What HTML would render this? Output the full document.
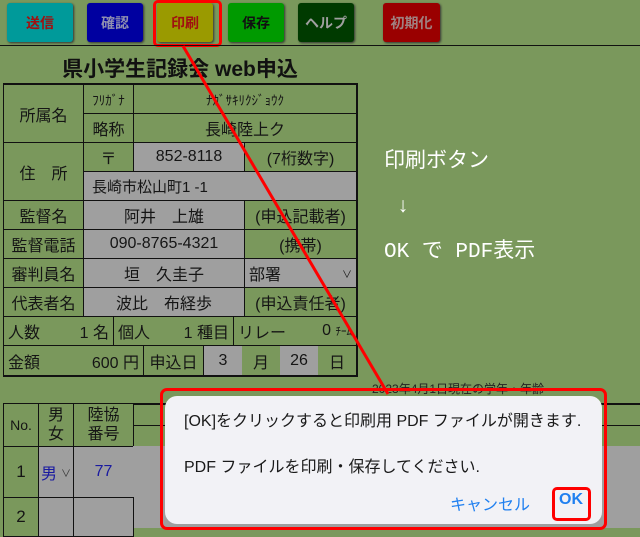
<!DOCTYPE html>
<html><head><meta charset="utf-8"><style>
*{margin:0;padding:0;box-sizing:border-box}
body{width:640px;height:528px;overflow:hidden;background:#7a985c;font-family:"Liberation Sans","Noto Sans CJK JP",sans-serif;position:relative;color:#151515}
.a{position:absolute}
.btn{position:absolute;top:3px;height:39px;border-radius:3px;box-shadow:1px 1px 2px #333;font-size:14px;font-weight:bold;display:flex;align-items:center;justify-content:center}
.c{position:absolute;display:flex;align-items:center;justify-content:center;font-size:16px;border:1px solid #111}
.g{background:#9f9f9f}
.k{background:#7a985c}
</style></head><body>
<div class="btn" style="left:7px;width:66px;background:#009a9a;color:#a01010">送信</div>
<div class="btn" style="left:87px;width:56px;background:#0000a0;color:#9090b0">確認</div>
<div class="btn" style="left:157px;width:56px;background:#9a9a00;color:#a01010">印刷</div>
<div class="btn" style="left:228px;width:56px;background:#009a00;color:#111">保存</div>
<div class="btn" style="left:298px;width:56px;background:#003a00;color:#a0a0a0">ヘルプ</div>
<div class="btn" style="left:383px;width:57px;background:#9a0000;color:#a08080">初期化</div>
<div class="a" style="left:153px;top:0;width:69px;height:47px;border:3px solid #f00;border-radius:5px"></div>
<div class="a" style="left:0;top:45px;width:640px;height:1px;background:#111"></div>
<div class="a" style="left:0;top:53px;width:360px;text-align:center;font-size:21px;font-weight:bold;color:#111">県小学生記録会 web申込</div>

<div class="a" style="left:3px;top:83px;width:355px;height:294px;border:2px solid #111"></div>
<div class="c k" style="left:3px;top:84px;width:81px;height:59px">所属名</div>
<div class="c k" style="left:83px;top:84px;width:51px;height:30px;font-size:13px">ﾌﾘｶﾞﾅ</div>
<div class="c k" style="left:133px;top:84px;width:224px;height:30px;font-size:13px">ﾅｶﾞｻｷﾘｸｼﾞｮｳｸ</div>
<div class="c k" style="left:83px;top:113px;width:51px;height:30px">略称</div>
<div class="c k" style="left:133px;top:113px;width:224px;height:30px">長崎陸上ク</div>
<div class="c k" style="left:3px;top:142px;width:81px;height:59px">住　所</div>
<div class="c k" style="left:83px;top:142px;width:51px;height:30px">〒</div>
<div class="c g" style="left:133px;top:142px;width:112px;height:30px">852-8118</div>
<div class="c k" style="left:244px;top:142px;width:113px;height:30px">(7桁数字)</div>
<div class="c g" style="left:83px;top:171px;width:274px;height:30px;justify-content:flex-start;padding-left:8px;font-size:15px">長崎市松山町1 -1</div>
<div class="c k" style="left:3px;top:200px;width:81px;height:30px">監督名</div>
<div class="c g" style="left:83px;top:200px;width:162px;height:30px">阿井　上雄</div>
<div class="c k" style="left:244px;top:200px;width:113px;height:30px">(申込記載者)</div>
<div class="c k" style="left:3px;top:229px;width:81px;height:30px">監督電話</div>
<div class="c g" style="left:83px;top:229px;width:162px;height:30px">090-8765-4321</div>
<div class="c k" style="left:244px;top:229px;width:113px;height:30px">(携帯)</div>
<div class="c k" style="left:3px;top:258px;width:81px;height:30px">審判員名</div>
<div class="c g" style="left:83px;top:258px;width:162px;height:30px">垣　久圭子</div>
<div class="c g" style="left:244px;top:258px;width:113px;height:30px;justify-content:space-between;padding:0 4px">部署<span style="font-size:10px">∨</span></div>
<div class="c k" style="left:3px;top:287px;width:81px;height:30px">代表者名</div>
<div class="c g" style="left:83px;top:287px;width:162px;height:30px">波比　布経歩</div>
<div class="c k" style="left:244px;top:287px;width:113px;height:30px">(申込責任者)</div>
<div class="c k" style="left:3px;top:316px;width:111px;height:30px;justify-content:space-between;padding:0 4px">人数<span>1 名</span></div>
<div class="c k" style="left:113px;top:316px;width:121px;height:30px;justify-content:space-between;padding:0 4px">個人<span>1 種目</span></div>
<div class="c k" style="left:233px;top:316px;width:124px;height:30px;justify-content:space-between;padding:0 4px">リレー<span>0 <small style="font-size:11px">ﾁｰﾑ</small></span></div>
<div class="c k" style="left:3px;top:345px;width:141px;height:31px;justify-content:space-between;padding:0 4px">金額<span>600 円</span></div>
<div class="c k" style="left:143px;top:345px;width:61px;height:31px">申込日</div>
<div class="a g" style="left:204px;top:346px;width:38px;height:29px;display:flex;align-items:center;justify-content:center;font-size:16px">3</div>
<div class="a" style="left:242px;top:346px;width:38px;height:29px;display:flex;align-items:center;justify-content:center;font-size:16px">月</div>
<div class="a g" style="left:280px;top:346px;width:38px;height:29px;display:flex;align-items:center;justify-content:center;font-size:16px">26</div>
<div class="a" style="left:318px;top:346px;width:38px;height:29px;display:flex;align-items:center;justify-content:center;font-size:16px">日</div>

<div class="a" style="left:372px;top:380px;font-size:12px;color:#222">2023年4月1日現在の学年・年齢</div>
<div class="a" style="left:3px;top:403px;width:640px;height:2px;background:#111"></div>
<div class="c k" style="left:3px;top:403px;width:36px;height:44px;font-size:14px">No.</div>
<div class="c k" style="left:38px;top:403px;width:36px;height:44px;line-height:19px;text-align:center">男<br>女</div>
<div class="c k" style="left:73px;top:403px;width:61px;height:44px;line-height:19px;text-align:center">陸協<br>番号</div>
<div class="a" style="left:133px;top:425px;width:507px;height:1px;background:#111"></div>
<div class="c k" style="left:3px;top:446px;width:36px;height:52px;font-size:17px">1</div>
<div class="c g" style="left:38px;top:446px;width:36px;height:52px;color:#1a1aa0;justify-content:space-around">男<span style="font-size:10px;color:#333">∨</span></div>
<div class="c g" style="left:73px;top:446px;width:61px;height:52px;color:#1a1aa0;font-size:16px">77</div>
<div class="a g" style="left:133px;top:446px;width:507px;height:82px"></div>
<div class="c k" style="left:3px;top:497px;width:36px;height:40px;font-size:17px">2</div>
<div class="c g" style="left:38px;top:497px;width:36px;height:40px"></div>
<div class="c g" style="left:73px;top:497px;width:61px;height:40px"></div>

<div class="a" style="left:384px;top:140px;font-size:21px;color:#fff;font-family:'Liberation Mono','Noto Sans CJK JP',monospace;line-height:45px">印刷ボタン<br>&nbsp;↓<br>OK で PDF表示</div>

<svg class="a" style="left:0;top:0" width="640" height="528"><line x1="183" y1="46" x2="388" y2="394" stroke="#f00" stroke-width="3"/></svg>

<div class="a" style="left:160px;top:388px;width:447px;height:142px;border:3px solid #f00;border-radius:7px"></div>
<div class="a" style="left:165px;top:396px;width:437px;height:128px;background:#f2f2f6;border-radius:12px;font-size:16px;color:#1a1a1a">
<div class="a" style="left:19px;top:11px;white-space:nowrap">[OK]をクリックすると印刷用 PDF ファイルが開きます.</div>
<div class="a" style="left:19px;top:57px;white-space:nowrap">PDF ファイルを印刷・保存してください.</div>
<div class="a" style="left:285px;top:95px;color:#2080f0">キャンセル</div>
<div class="a" style="left:394px;top:95px;color:#2080f0;font-weight:bold">OK</div>
</div>
<div class="a" style="left:552px;top:487px;width:39px;height:34px;border:3px solid #f00;border-radius:5px"></div>
</body></html>
